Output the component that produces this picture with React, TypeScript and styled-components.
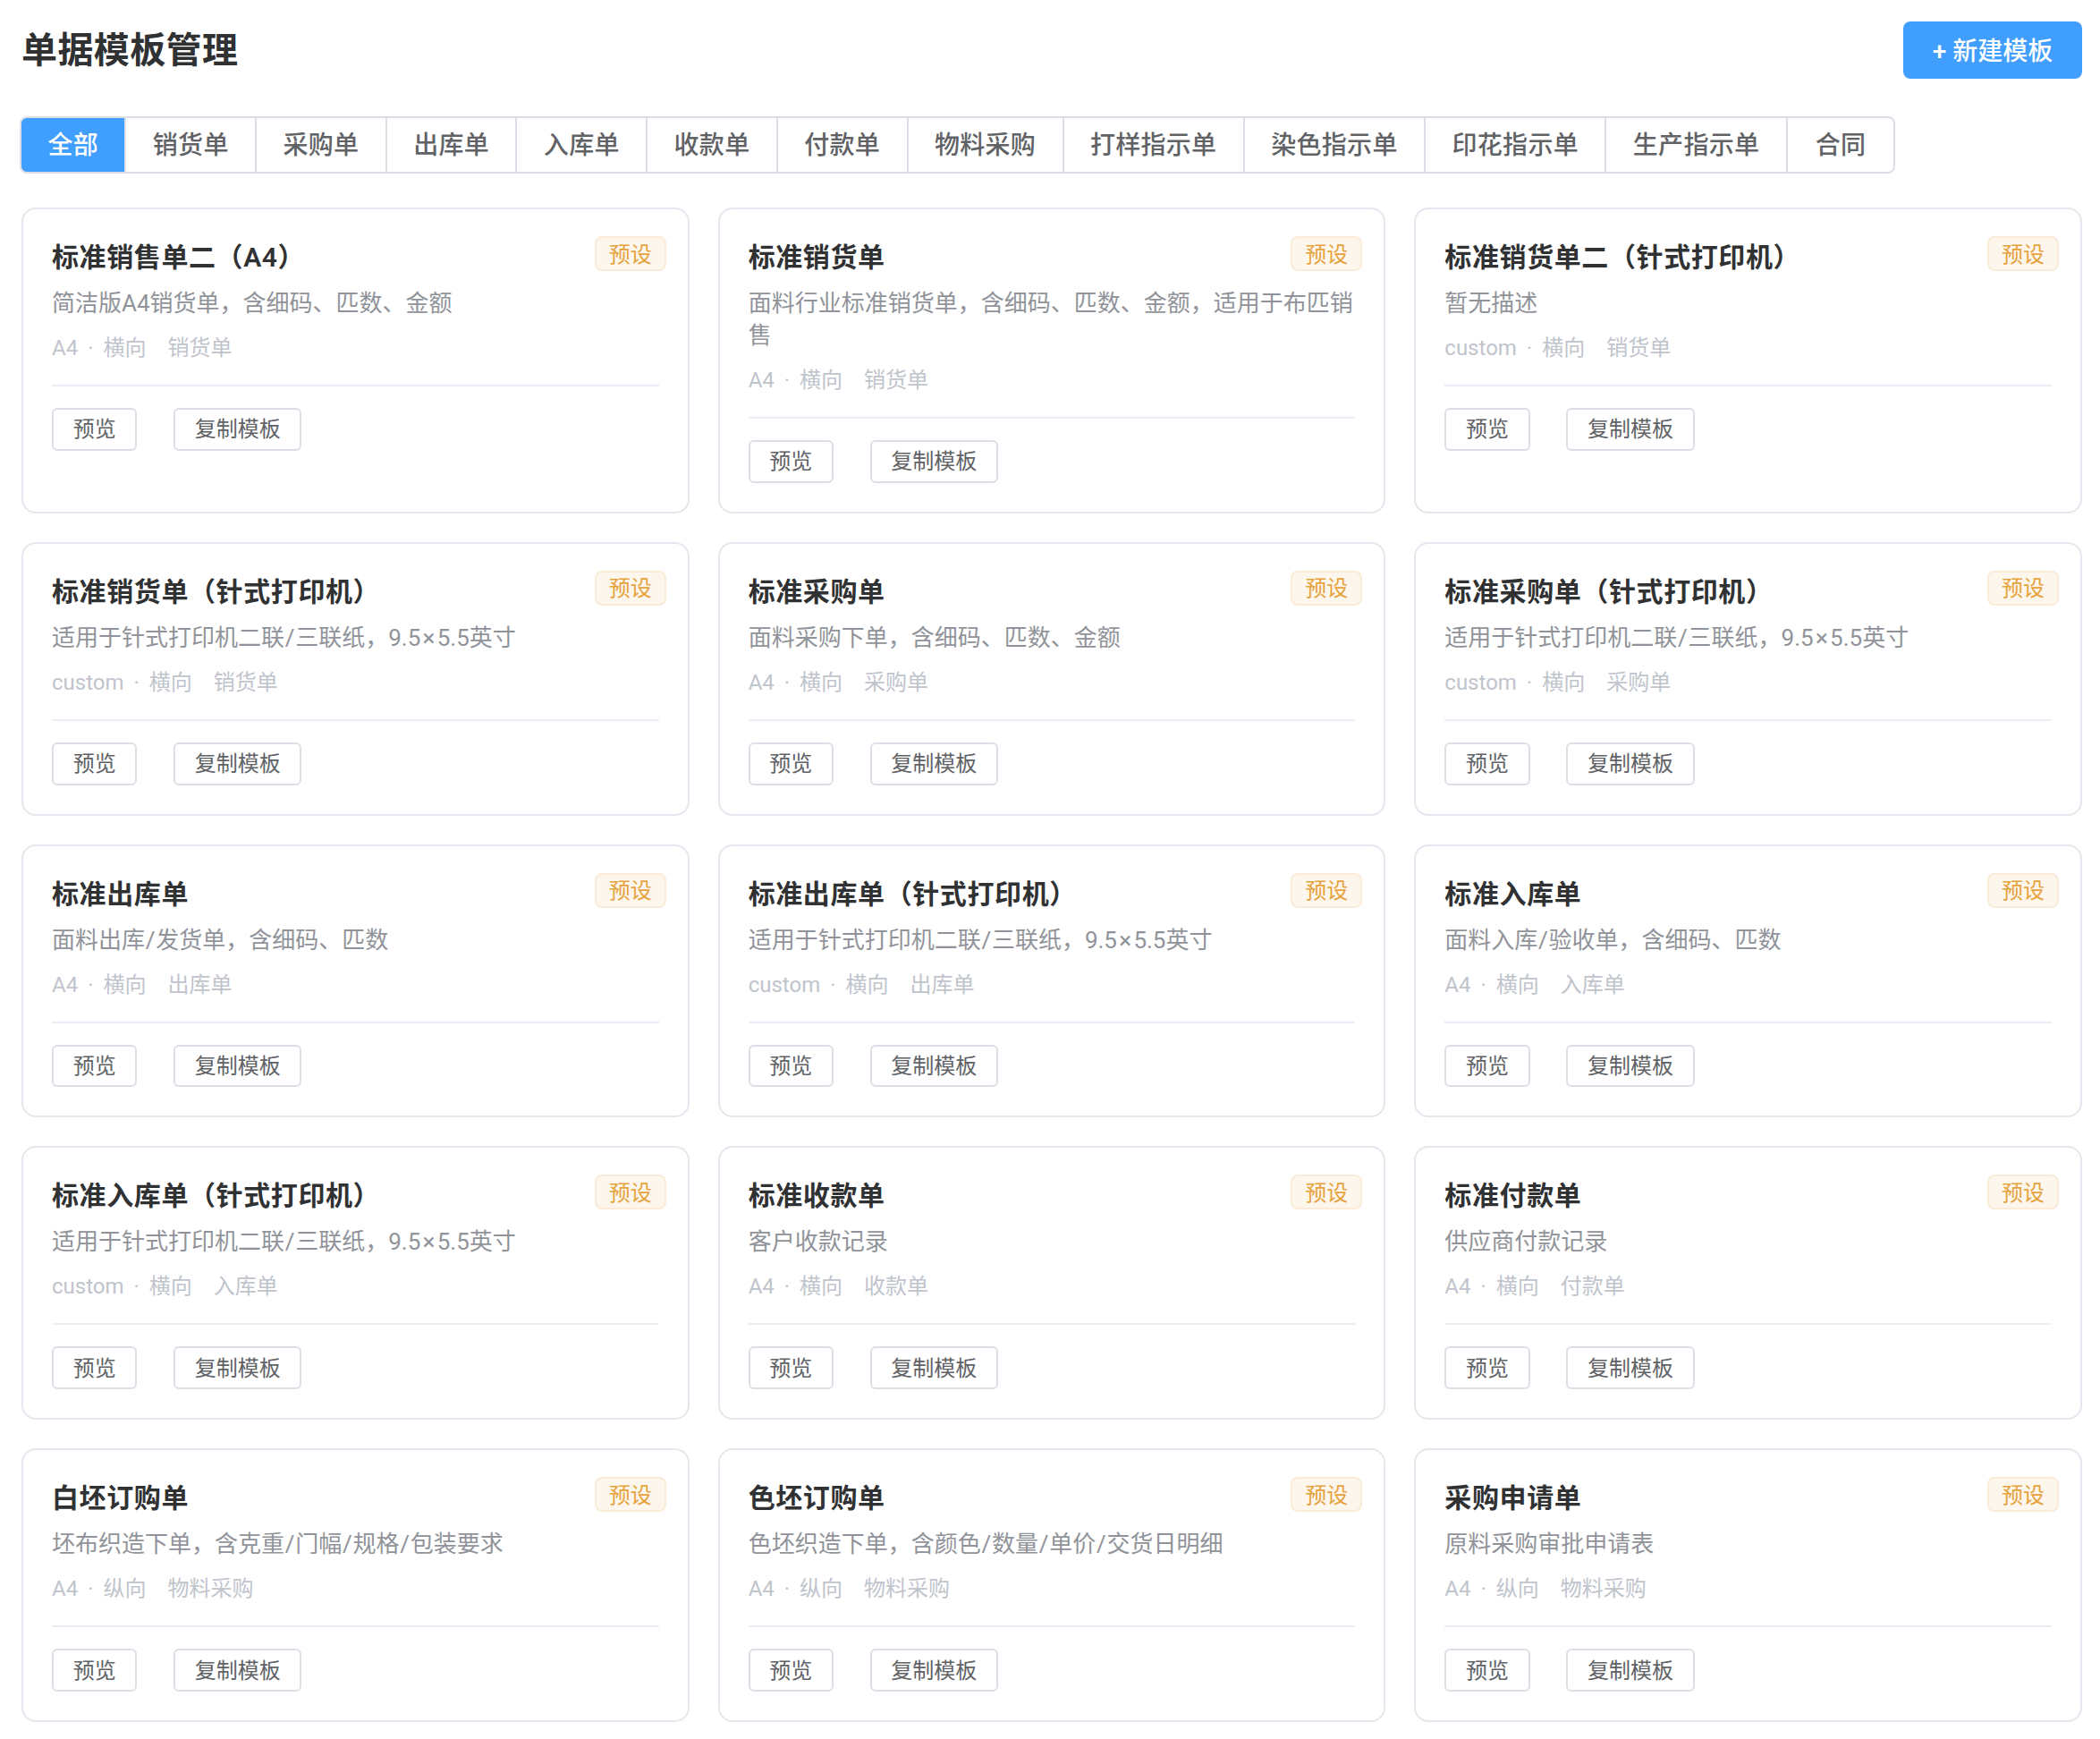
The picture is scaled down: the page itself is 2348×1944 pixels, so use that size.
import { Fragment } from 'react';
import styled, { createGlobalStyle } from 'styled-components';

const Global = createGlobalStyle`
  html, body {
    margin: 0;
    padding: 0;
    background: #fff;
    overflow: hidden;
  }
  * {
    box-sizing: border-box;
  }
`;

const Page = styled.div`
  padding: 24px 20px 24px 24px;
  font-family: Roboto, "Noto Sans CJK SC", sans-serif;
  color: #303133;
`;

const Header = styled.div`
  display: flex;
  align-items: center;
  justify-content: space-between;
  margin-bottom: 42px;
`;

const PageTitle = styled.h2`
  margin: 0;
  padding-top: 2px;
  font-size: 40px;
  font-weight: 600;
  line-height: 56px;
  letter-spacing: 0.4px;
`;

const NewBtn = styled.button`
  width: 200px;
  height: 64px;
  border: none;
  border-radius: 8px;
  background: #409eff;
  color: #fff;
  font-family: inherit;
  font-size: 28px;
  font-weight: 500;
  padding: 0 0 2px;
`;

const Tabs = styled.div`
  display: flex;
  width: max-content;
  margin: 0 0 38px -2px;
`;

const Tab = styled.div<{ $active?: boolean }>`
  padding: 17px 29.4px 15px;
  font-size: 28px;
  line-height: 28px;
  letter-spacing: 0.3px;
  font-weight: 500;
  color: ${({ $active }) => ($active ? '#fff' : '#606266')};
  background: ${({ $active }) => ($active ? '#409eff' : '#fff')};
  border: 2px solid #dcdfe6;
  border-left: none;
  &:first-child {
    border-left: 2px solid #dcdfe6;
    border-radius: 8px 0 0 8px;
  }
  &:last-child {
    padding-left: 31px;
    padding-right: 31px;
    border-radius: 0 8px 8px 0;
  }
`;

const Grid = styled.div`
  display: grid;
  grid-template-columns: repeat(3, 1fr);
  gap: 32px;
`;

const Card = styled.div`
  position: relative;
  border: 2px solid #e4e7ed;
  border-radius: 16px;
  padding: 32px;
  background: #fff;
`;

const Badge = styled.span`
  position: absolute;
  top: 30px;
  right: 24px;
  width: 80px;
  height: 39px;
  padding-bottom: 3px;
  display: flex;
  align-items: center;
  justify-content: center;
  font-size: 24px;
  color: #e6a23c;
  background: #fdf6ec;
  border: 2px solid #faecd8;
  border-radius: 8px;
`;

const CardTitle = styled.div`
  font-size: 30px;
  font-weight: 600;
  line-height: 40px;
  letter-spacing: 0.6px;
  margin: 2px 0 13px;
`;

const Desc = styled.div`
  font-size: 26px;
  line-height: 36px;
  color: #909399;
  margin-bottom: 15px;
`;

const Mark = styled.span<{ $gap: number }>`
  margin: 0 ${({ $gap }) => $gap}px;
`;

const Meta = styled.div`
  display: flex;
  gap: 24px;
  font-size: 24px;
  line-height: 34px;
  color: #c0c4cc;
  padding-bottom: 24px;
  border-bottom: 2px solid #ebeef5;
  margin-bottom: 24px;
`;

const Dot = styled.span`
  margin: 0 11px;
`;

const Actions = styled.div`
  display: flex;
  gap: 40.6px;
`;

const ActionBtn = styled.button`
  height: 47.8px;
  padding: 0 21.7px 4px;
  border: 2px solid #dcdfe6;
  border-radius: 6px;
  background: #fff;
  color: #606266;
  font-family: inherit;
  font-size: 24px;
`;

const tabs = [
  '全部',
  '销货单',
  '采购单',
  '出库单',
  '入库单',
  '收款单',
  '付款单',
  '物料采购',
  '打样指示单',
  '染色指示单',
  '印花指示单',
  '生产指示单',
  '合同',
];

const dotMatrix = '适用于针式打印机二联/三联纸，9.5×5.5英寸';

const templates = [
  { title: '标准销售单二（A4）', desc: '简洁版A4销货单，含细码、匹数、金额', size: 'A4', dir: '横向', type: '销货单' },
  { title: '标准销货单', desc: '面料行业标准销货单，含细码、匹数、金额，适用于布匹销售', size: 'A4', dir: '横向', type: '销货单' },
  { title: '标准销货单二（针式打印机）', desc: '暂无描述', size: 'custom', dir: '横向', type: '销货单' },
  { title: '标准销货单（针式打印机）', desc: dotMatrix, size: 'custom', dir: '横向', type: '销货单' },
  { title: '标准采购单', desc: '面料采购下单，含细码、匹数、金额', size: 'A4', dir: '横向', type: '采购单' },
  { title: '标准采购单（针式打印机）', desc: dotMatrix, size: 'custom', dir: '横向', type: '采购单' },
  { title: '标准出库单', desc: '面料出库/发货单，含细码、匹数', size: 'A4', dir: '横向', type: '出库单' },
  { title: '标准出库单（针式打印机）', desc: dotMatrix, size: 'custom', dir: '横向', type: '出库单' },
  { title: '标准入库单', desc: '面料入库/验收单，含细码、匹数', size: 'A4', dir: '横向', type: '入库单' },
  { title: '标准入库单（针式打印机）', desc: dotMatrix, size: 'custom', dir: '横向', type: '入库单' },
  { title: '标准收款单', desc: '客户收款记录', size: 'A4', dir: '横向', type: '收款单' },
  { title: '标准付款单', desc: '供应商付款记录', size: 'A4', dir: '横向', type: '付款单' },
  { title: '白坯订购单', desc: '坯布织造下单，含克重/门幅/规格/包装要求', size: 'A4', dir: '纵向', type: '物料采购' },
  { title: '色坯订购单', desc: '色坯织造下单，含颜色/数量/单价/交货日明细', size: 'A4', dir: '纵向', type: '物料采购' },
  { title: '采购申请单', desc: '原料采购审批申请表', size: 'A4', dir: '纵向', type: '物料采购' },
];

// slash and times sign run wider in the original font
const spaceMarks = (text: string) =>
  text.split(/([/×])/).map((part, i) => (
    <Fragment key={i}>
      {part === '/' || part === '×' ? <Mark $gap={part === '/' ? 0.75 : 2.25}>{part}</Mark> : part}
    </Fragment>
  ));

export default function App() {
  return (
    <Page>
      <Global />
      <Header>
        <PageTitle>单据模板管理</PageTitle>
        <NewBtn>+ 新建模板</NewBtn>
      </Header>
      <Tabs>
        {tabs.map((t, i) => (
          <Tab key={t} $active={i === 0}>
            {t}
          </Tab>
        ))}
      </Tabs>
      <Grid>
        {templates.map((t) => (
          <Card key={t.title}>
            <Badge>预设</Badge>
            <CardTitle>{t.title}</CardTitle>
            <Desc>{spaceMarks(t.desc)}</Desc>
            <Meta>
              <span>
                {t.size}
                <Dot>·</Dot>
                {t.dir}
              </span>
              <span>{t.type}</span>
            </Meta>
            <Actions>
              <ActionBtn>预览</ActionBtn>
              <ActionBtn>复制模板</ActionBtn>
            </Actions>
          </Card>
        ))}
      </Grid>
    </Page>
  );
}
